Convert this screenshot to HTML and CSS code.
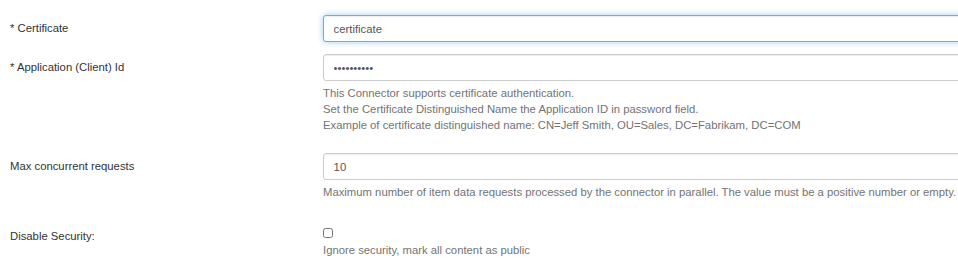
FILE: index.html
```html
<!DOCTYPE html>
<html lang="en">
<head>
  <meta charset="UTF-8" />
  <meta name="viewport" content="width=device-width, initial-scale=1.0"/>
  <title>Connector Settings</title>
  <link rel="stylesheet" href="styles.css">
</head>
<body>
  <form class="settings">
    <div class="form-row">
      <label class="row-label" for="certificate">* Certificate</label>
      <div class="row-field">
        <input type="text" id="certificate" class="field-input focused" value="certificate" />
      </div>
    </div>

    <div class="form-row">
      <label class="row-label" for="clientId">* Application (Client) Id</label>
      <div class="row-field">
        <input type="password" id="clientId" class="field-input" value="0123456789" />
        <p class="help">
          This Connector supports certificate authentication.<br/>
          Set the Certificate Distinguished Name the Application ID in password field.<br/>
          Example of certificate distinguished name: CN=Jeff Smith, OU=Sales, DC=Fabrikam, DC=COM
        </p>
      </div>
    </div>

    <div class="form-row">
      <label class="row-label" for="maxRequests">Max concurrent requests</label>
      <div class="row-field">
        <input type="text" id="maxRequests" class="field-input" value="10" />
        <p class="help">Maximum number of item data requests processed by the connector in parallel. The value must be a positive number or empty.</p>
      </div>
    </div>

    <div class="form-row check-row">
      <label class="row-label" for="disableSecurity">Disable Security:</label>
      <div class="row-field">
        <div class="check-box"><input type="checkbox" id="disableSecurity" /></div>
        <p class="help">Ignore security, mark all content as public</p>
      </div>
    </div>
  </form>
</body>
</html>
```

FILE: styles.css
```css
html, body {
  margin: 0;
  overflow: hidden;
}
body {
  font-family: "Liberation Sans", Arial, sans-serif;
  font-size: 11.3px;
  line-height: 16px;
  color: #333;
  background: #fff;
  padding-top: 15px;
}
.form-row {
  display: grid;
  grid-template-columns: 323px 1fr;
  margin-bottom: 12px;
}
.row-label {
  padding-left: 10px;
  padding-top: 5px;
}
.row-field {
  min-width: 0;
}
.field-input {
  display: block;
  box-sizing: border-box;
  width: calc(100% + 30px);
  height: 27px;
  padding: 0 9.6px;
  border: 1px solid #ccc;
  border-radius: 3px;
  font-family: inherit;
  font-size: 11.3px;
  color: #555;
  background: #fff;
  box-shadow: inset 0 1px 1px rgba(0, 0, 0, 0.075);
  outline: none;
}
.focused {
  border-color: #66afe9;
  box-shadow: inset 0 1px 1px rgba(0, 0, 0, 0.075), 0 0 6px rgba(102, 175, 233, 0.6);
}
.help {
  margin: 4px 0 8px;
  color: #737373;
  white-space: nowrap;
}
.check-row .row-label {
  padding-top: 8px;
}
.check-box {
  padding-top: 8px;
  height: 10px;
}
.check-box input {
  display: block;
  width: 10px;
  height: 10px;
  margin: 0;
}
```
